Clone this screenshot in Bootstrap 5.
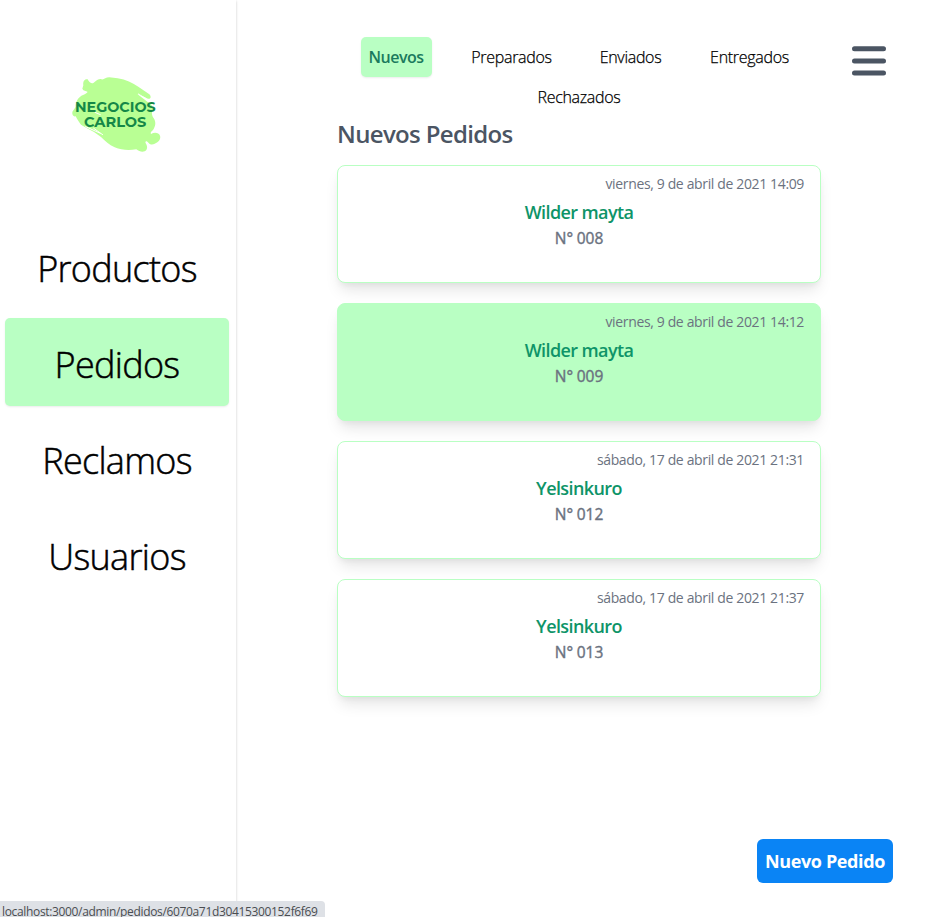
<!DOCTYPE html>
<html lang="es">
<head>
<meta charset="utf-8">
<meta name="viewport" content="width=device-width, initial-scale=1">
<title>Nuevos Pedidos</title>
<link href="https://cdn.jsdelivr.net/npm/bootstrap@5.3.0/dist/css/bootstrap.min.css" rel="stylesheet">
<style>
body{font-family:"Segoe UI","Open Sans","Noto Sans",sans-serif;color:#000;height:917px;overflow:hidden;background:#fff}
a{color:inherit;text-decoration:none}
.sidebar{width:236px;padding:0 7px 0 5px;box-shadow:0 1px 3px rgba(0,0,0,.14),0 1px 2px rgba(0,0,0,.08)}
.brand{height:222px;padding-top:60px}
.brand svg{margin-left:-4px}
.side-item{height:88px;border-radius:5px;font-size:36px;font-weight:300;line-height:1;padding-top:5px;letter-spacing:-.7px;-webkit-text-stroke:.5px #000}
.picked{background:#b9ffc3;box-shadow:0 1px 2px rgba(0,0,0,.08)}
.main-col{width:484px;margin-left:101px;padding-top:37px}
.tabs{column-gap:32px}
.tab{height:40px;border-radius:5px;font-size:16px;font-weight:300;letter-spacing:-.3px;-webkit-text-stroke:.25px #000}
.tab.picked{color:#1b7a5d;font-weight:600;letter-spacing:-.5px;-webkit-text-stroke:0}
.t1{width:71px}.t2{width:96px}.t3{width:78px}.t4{width:96px}.t5{width:100px}
.page-title{font-size:24px;font-weight:600;color:#4b5563;line-height:34px;margin:0 0 14px;letter-spacing:-.65px}
.order{height:118px;border:1px solid #b9ffc3;border-radius:8px;padding:8px 16px;margin-bottom:20px;background:#fff;box-shadow:0 10px 15px -3px rgba(0,0,0,.1),0 4px 6px -2px rgba(0,0,0,.05)}
.order.active{background:#b9ffc3}
.when{font-size:14px;line-height:20px;color:#6b7280;letter-spacing:-.36px}
.who{font-size:18px;line-height:28px;font-weight:600;color:#0e9468;margin-top:4px;letter-spacing:-.6px}
.num{font-size:15.5px;line-height:25px;color:#6b7280;letter-spacing:-.1px;-webkit-text-stroke:.4px #6b7280}
.menu-btn{margin:46px 0 0 31px;width:34px;height:30px}
.new-btn{right:38px;bottom:34px;width:136px;height:44px;border-radius:6px;background:#0a84f5;color:#fff;font-size:18px;font-weight:700;letter-spacing:-.37px}
.new-btn:hover{color:#fff;background:#0a84f5}
.status-tip{left:0;bottom:0;width:325px;height:16px;background:#dee1e6;border-radius:0 4px 0 0;color:#4a4d51;font-size:12px;line-height:22px;padding-left:2px;letter-spacing:-.34px;overflow:hidden}
</style>
<script src="https://cdn.jsdelivr.net/npm/bootstrap@5.3.0/dist/js/bootstrap.bundle.min.js"></script>
</head>
<body class="position-relative">
<div class="d-flex h-100">
  <aside class="sidebar flex-shrink-0 h-100">
    <a href="#" class="brand d-flex justify-content-center align-items-start">
      <svg width="130" height="110" viewBox="0 0 390 330" role="img" aria-label="Negocios Carlos">
        <path fill="#b9ff94" d="M100 76C98 64 104 56 113 58C117 66 122 72 130 69C137 64 142 56 152 57C161 62 165 52 178 52L203 55C228 59 247 69 266 81L298 103C305 110 302 119 294 116L262 102L292 125C304 132 309 138 308 149C306 155 304 160 309 172C317 182 319 194 311 207C307 214 300 215 303 222C313 216 326 217 330 227C333 236 327 243 322 247C314 253 303 257 296 249C290 240 283 243 288 251C293 259 293 270 284 274C275 278 267 273 259 268C235 272 214 270 194 262C177 254 166 244 153 231L132 216C116 207 105 202 93 194C86 185 82 178 77 169C68 171 65 161 68 154L77 141C77 126 82 116 94 107C101 104 108 102 113 96C107 91 101 94 97 86Z"/>
        <path fill="none" stroke="#fff" stroke-width="3" stroke-linecap="round" d="M92 197L143 229M107 200L151 220M131 205L158 224M135 157L151 164M265 102L287 115"/>
        <g fill="#158747" font-family="Montserrat,Inter,sans-serif" font-size="43" font-weight="700">
          <text x="75" y="157" textLength="242" lengthAdjust="spacingAndGlyphs">NEGOCIOS</text>
          <text x="102" y="201" textLength="187" lengthAdjust="spacingAndGlyphs">CARLOS</text>
        </g>
      </svg>
    </a>
    <nav class="d-flex flex-column gap-2">
      <a href="#" class="side-item d-flex align-items-center justify-content-center"><span>Productos</span></a>
      <a href="#" class="side-item picked d-flex align-items-center justify-content-center"><span>Pedidos</span></a>
      <a href="#" class="side-item d-flex align-items-center justify-content-center"><span>Reclamos</span></a>
      <a href="#" class="side-item d-flex align-items-center justify-content-center"><span>Usuarios</span></a>
    </nav>
  </aside>
  <main class="main-col flex-shrink-0">
    <nav class="tabs d-flex flex-wrap justify-content-center">
      <a href="#" class="tab t1 picked d-flex align-items-center justify-content-center">Nuevos</a>
      <a href="#" class="tab t2 d-flex align-items-center justify-content-center">Preparados</a>
      <a href="#" class="tab t3 d-flex align-items-center justify-content-center">Enviados</a>
      <a href="#" class="tab t4 d-flex align-items-center justify-content-center">Entregados</a>
      <a href="#" class="tab t5 d-flex align-items-center justify-content-center">Rechazados</a>
    </nav>
    <h1 class="page-title">Nuevos Pedidos</h1>
    <article class="order text-center"><div class="when text-end">viernes, 9 de abril de 2021 14:09</div><div class="who">Wilder mayta</div><div class="num">N° 008</div></article>
    <article class="order active text-center"><div class="when text-end">viernes, 9 de abril de 2021 14:12</div><div class="who">Wilder mayta</div><div class="num">N° 009</div></article>
    <article class="order text-center"><div class="when text-end">sábado, 17 de abril de 2021 21:31</div><div class="who">Yelsinkuro</div><div class="num">N° 012</div></article>
    <article class="order text-center"><div class="when text-end">sábado, 17 de abril de 2021 21:37</div><div class="who">Yelsinkuro</div><div class="num">N° 013</div></article>
  </main>
  <button class="menu-btn btn p-0 border-0 d-flex" aria-label="Menú">
    <svg width="34" height="30" viewBox="0 0 34 30" stroke="#4b5563" stroke-width="5" stroke-linecap="round"><path d="M2.5 2.7h29M2.5 14.9h29M2.5 27h29"/></svg>
  </button>
</div>
<a href="#" class="new-btn btn p-0 border-0 position-absolute d-flex align-items-center justify-content-center">Nuevo Pedido</a>
<div class="status-tip position-absolute text-nowrap"><span>localhost:3000/admin/pedidos/6070a71d30415300152f6f69</span></div>
</body>
</html>
